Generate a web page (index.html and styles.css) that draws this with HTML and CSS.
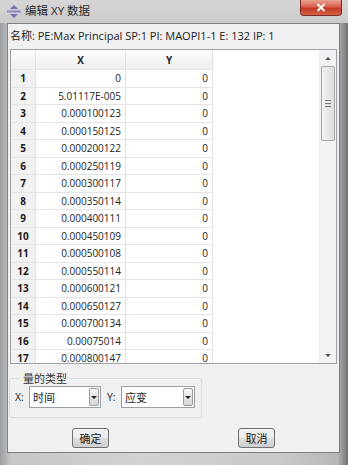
FILE: index.html
```html
<!DOCTYPE html>
<html lang="zh">
<head>
<meta charset="UTF-8">
<title>编辑 XY 数据</title>
<link rel="stylesheet" href="styles.css">
</head>
<body>
<div class="window">
  <div class="titlebar">
    <svg class="app-icon" width="14" height="13" viewBox="0 0 14 13">
      <path d="M7 0 L11 4 L3 4 Z" fill="#7a6fb4"/>
      <rect x="0" y="5.5" width="14" height="2" fill="#8a86c0"/>
      <path d="M7 13 L11 9 L3 9 Z" fill="#7a6fb4"/>
    </svg>
    <div class="title">编辑 XY 数据</div>
    <div class="close">
      <svg width="10" height="9" viewBox="0 0 10 9"><path d="M1.5 1 L8.5 8 M8.5 1 L1.5 8" stroke="#fff" stroke-width="2"/></svg>
    </div>
  </div>

  <div class="client">
    <div class="name">名称: PE:Max Principal SP:1 PI: MAOPI1-1 E: 132 IP: 1</div>

    <div class="table-box">
      <div class="grid">
        <div class="row head">
          <div class="rh"></div>
          <div class="cx">X</div>
          <div class="cy">Y</div>
        </div>
        <div class="row"><div class="rh">1</div><div class="cx">0</div><div class="cy">0</div></div>
        <div class="row"><div class="rh">2</div><div class="cx">5.01117E-005</div><div class="cy">0</div></div>
        <div class="row"><div class="rh">3</div><div class="cx">0.000100123</div><div class="cy">0</div></div>
        <div class="row"><div class="rh">4</div><div class="cx">0.000150125</div><div class="cy">0</div></div>
        <div class="row"><div class="rh">5</div><div class="cx">0.000200122</div><div class="cy">0</div></div>
        <div class="row"><div class="rh">6</div><div class="cx">0.000250119</div><div class="cy">0</div></div>
        <div class="row"><div class="rh">7</div><div class="cx">0.000300117</div><div class="cy">0</div></div>
        <div class="row"><div class="rh">8</div><div class="cx">0.000350114</div><div class="cy">0</div></div>
        <div class="row"><div class="rh">9</div><div class="cx">0.000400111</div><div class="cy">0</div></div>
        <div class="row"><div class="rh">10</div><div class="cx">0.000450109</div><div class="cy">0</div></div>
        <div class="row"><div class="rh">11</div><div class="cx">0.000500108</div><div class="cy">0</div></div>
        <div class="row"><div class="rh">12</div><div class="cx">0.000550114</div><div class="cy">0</div></div>
        <div class="row"><div class="rh">13</div><div class="cx">0.000600121</div><div class="cy">0</div></div>
        <div class="row"><div class="rh">14</div><div class="cx">0.000650127</div><div class="cy">0</div></div>
        <div class="row"><div class="rh">15</div><div class="cx">0.000700134</div><div class="cy">0</div></div>
        <div class="row"><div class="rh">16</div><div class="cx">0.00075014</div><div class="cy">0</div></div>
        <div class="row"><div class="rh">17</div><div class="cx">0.000800147</div><div class="cy">0</div></div>
      </div>
      <div class="vscroll">
        <div class="arrow up"></div>
        <div class="thumb"><span></span><span></span><span></span></div>
        <div class="track"></div>
        <div class="arrow down"></div>
      </div>
    </div>

    <fieldset class="group">
      <legend>量的类型</legend>
      <div class="combos">
        <span class="lbl">X:</span>
        <div class="combo cx-combo"><span>时间</span><div class="drop"></div></div>
        <span class="lbl">Y:</span>
        <div class="combo cy-combo"><span>应变</span><div class="drop"></div></div>
      </div>
    </fieldset>

    <div class="buttons">
      <button class="btn ok">确定</button>
      <button class="btn cancel">取消</button>
    </div>
  </div>
</div>
</body>
</html>
```

FILE: styles.css
```css
* {
  margin: 0;
  padding: 0;
  box-sizing: border-box;
}

body {
  font-family: 'Open Sans', 'Noto Sans CJK SC', sans-serif;
  font-size: 10px;
  color: #222;
  background: #b8b8b8;
}

.window {
  width: 348px;
  height: 465px;
  display: flex;
  flex-direction: column;
  background:
    linear-gradient(90deg, #9c9fa3 0%, #c4c6c8 3%, #d2d2d2 40%, #c9c9c9 80%, #b7b7b7 97%, #6f6f6f 100%);
}

/* title bar */
.titlebar {
  height: 23px;
  display: flex;
  align-items: flex-start;
  background: linear-gradient(180deg, #d6d6d6, #cacaca);
}

.app-icon {
  margin: 5px 0 0 7px;
}

.title {
  margin-left: 4px;
  line-height: 22px;
  font-size: 11.5px;
  color: #2a2a2a;
}

.close {
  margin-left: auto;
  margin-right: 6px;
  width: 42px;
  height: 16px;
  border: 1px solid #7d2a22;
  border-top: none;
  border-radius: 0 0 4px 4px;
  background: linear-gradient(180deg, #e8a193 0%, #d8604c 45%, #c23a24 55%, #d5634a 100%);
  display: flex;
  align-items: center;
  justify-content: center;
}

/* dialog body */
.client {
  flex: 1;
  margin: 0 8px 12px 7px;
  background: #f0f0f0;
  border: 1px solid #7b7f84;
  padding: 0 2px 0 2px;
  display: flex;
  flex-direction: column;
}

.name {
  height: 25px;
  line-height: 23px;
  font-size: 11px;
  white-space: nowrap;
}

.table-box {
  height: 315px;
  background: #fff;
  border: 1px solid #9da3aa;
  display: flex;
}

.grid {
  flex: 1;
  overflow: hidden;
}

.row {
  display: flex;
  height: 17.5px;
  line-height: 17px;
}

.row.head {
  height: 20px;
  line-height: 20px;
}

.row > div {
  border-right: 1px solid #e1e1e1;
  border-bottom: 1px solid #e4e4e4;
}

.rh {
  width: 25px;
  text-align: center;
  font-weight: bold;
  background: #f2f2f2;
  color: #1a1a1a;
}

.cx {
  width: 90px;
  text-align: right;
  padding-right: 4px;
}

.cy {
  width: 87px;
  text-align: right;
  padding-right: 4px;
}

.head > div {
  background: linear-gradient(180deg, #fdfdfd, #eeeeee);
  text-align: center;
  font-weight: bold;
  padding: 0;
}

/* vertical scrollbar */
.vscroll {
  width: 17px;
  background: #f2f2f2;
  border-left: 1px solid #ececec;
  display: flex;
  flex-direction: column;
  align-items: center;
}

.arrow {
  height: 16px;
  width: 100%;
  display: flex;
  align-items: center;
  justify-content: center;
}

.arrow.up::before,
.arrow.down::before {
  content: '';
  border-left: 3px solid transparent;
  border-right: 3px solid transparent;
}

.arrow.up::before {
  border-bottom: 3px solid #555;
}

.arrow.down::before {
  border-top: 3px solid #555;
}

.thumb {
  width: 14px;
  height: 75px;
  border: 1px solid #a5a5a5;
  border-radius: 2px;
  background: linear-gradient(90deg, #f2f2f2, #dcdcdc);
  display: flex;
  flex-direction: column;
  align-items: center;
  justify-content: center;
  gap: 2px;
}

.thumb span {
  width: 6px;
  height: 1px;
  background: #777;
}

.track {
  flex: 1;
}

/* quantity type group */
.group {
  margin: 6px 0 0 -1px;
  width: 191px;
  height: 48px;
  border: 1px solid #d8dde2;
  border-radius: 3px;
  padding: 0 0 0 5px;
}

.group legend {
  font-size: 11px;
  margin-left: 5px;
  padding: 0 3px;
  color: #333;
}

.combos {
  display: flex;
  align-items: center;
}

.lbl {
  font-size: 10.5px;
  width: 14px;
}

.combo {
  height: 22px;
  border: 1px solid #9aa0a6;
  background: #fff;
  display: flex;
  align-items: center;
  font-size: 11px;
  padding-left: 3px;
  margin-right: 6px;
}

.combo span {
  flex: 1;
}

.cx-combo {
  width: 72px;
}

.cy-combo {
  width: 74px;
}

.drop {
  width: 10px;
  height: 18px;
  margin-right: 1px;
  border: 1px solid #9a9a9a;
  border-radius: 2px;
  background: linear-gradient(180deg, #f6f6f6, #d6d6d6);
  display: flex;
  align-items: center;
  justify-content: center;
}

.drop::before {
  content: '';
  border-left: 3px solid transparent;
  border-right: 3px solid transparent;
  border-top: 3px solid #222;
}

/* dialog buttons */
.buttons {
  display: flex;
  margin-top: 10px;
  padding-left: 62px;
}

.btn {
  width: 37px;
  height: 20px;
  font-family: 'Noto Sans CJK SC', sans-serif;
  font-size: 11px;
  color: #222;
  border: 1px solid #707070;
  border-radius: 3px;
  background: linear-gradient(180deg, #f2f2f2 0%, #ebebeb 50%, #dddddd 51%, #cfcfcf 100%);
}

.btn.cancel {
  margin-left: 129px;
}
```
